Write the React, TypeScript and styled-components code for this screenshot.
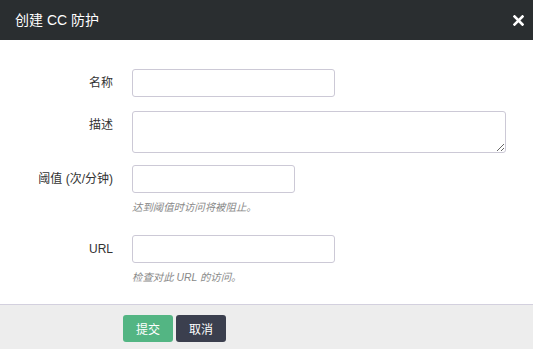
import styled, { createGlobalStyle } from "styled-components";

const GlobalStyle = createGlobalStyle`
    html, body {
        margin: 0;
        padding: 0;
        height: 100%;
        background: #fff;
    }
    body {
        font-family: "Liberation Sans", "Noto Sans CJK SC", sans-serif;
        color: #333;
    }
    #root {
        height: 100%;
    }
`;

const Modal = styled.div`
    display: flex;
    flex-direction: column;
    height: 100vh;
    background: #fff;
`;

const Header = styled.div`
    display: flex;
    align-items: center;
    justify-content: space-between;
    height: 40px;
    padding: 0 8px 0 15px;
    background: #2a2e30;
    color: #fff;
    flex-shrink: 0;
`;

const Title = styled.h4`
    margin: 0;
    font-size: 14px;
    font-weight: normal;
    line-height: 1;
`;

const CloseButton = styled.button`
    display: flex;
    align-items: center;
    justify-content: center;
    width: 14px;
    height: 14px;
    padding: 0;
    border: 0;
    background: transparent;
    cursor: pointer;
`;

const Body = styled.form`
    flex: 1;
    padding-top: 29px;
`;

const FormGroup = styled.div<{ $mb: number }>`
    display: grid;
    grid-template-columns: 113px 1fr;
    column-gap: 19px;
    margin-bottom: ${(p) => p.$mb}px;
`;

const Label = styled.label`
    text-align: right;
    font-size: 12px;
    line-height: 28px;
    color: #333;
`;

const Field = styled.div`
    display: flex;
    flex-direction: column;
    align-items: flex-start;
`;

const Input = styled.input<{ $w: number }>`
    width: ${(p) => p.$w}px;
    height: 28px;
    padding: 0 8px;
    border: 1px solid #ccc9d6;
    border-radius: 3px;
    box-sizing: border-box;
    font-size: 12px;
    outline: none;
`;

const TextArea = styled.textarea`
    width: 374px;
    height: 42px;
    padding: 4px 8px;
    border: 1px solid #ccc9d6;
    border-radius: 3px;
    box-sizing: border-box;
    font-size: 12px;
    font-family: inherit;
    outline: none;
`;

const Help = styled.span`
    margin-top: 7px;
    font-size: 10.4px;
    line-height: 16px;
    font-style: italic;
    color: #888;
`;

const Footer = styled.div`
    display: flex;
    gap: 3px;
    height: 45px;
    padding: 10px 0 0 123px;
    box-sizing: border-box;
    border-top: 1px solid #d3d0de;
    background: #ededed;
    flex-shrink: 0;
`;

const Button = styled.button<{ $variant: "primary" | "dark" }>`
    width: 50px;
    height: 27px;
    padding: 0;
    border: 0;
    border-radius: 3px;
    font-size: 12px;
    font-family: inherit;
    color: #fff;
    background: ${(p) => (p.$variant === "primary" ? "#53b583" : "#3b3f4e")};
    cursor: pointer;
`;

export default function App() {
    return (
        <>
            <GlobalStyle />
            <Modal>
                <Header>
                    <Title>创建 CC 防护</Title>
                    <CloseButton aria-label="close">
                        <svg width="11" height="11" viewBox="0 0 11 11">
                            <path d="M1.5 1.5 L9.5 9.5 M9.5 1.5 L1.5 9.5" stroke="#fff" strokeWidth="2.6" strokeLinecap="square" />
                        </svg>
                    </CloseButton>
                </Header>
                <Body>
                    <FormGroup $mb={14}>
                        <Label>名称</Label>
                        <Field>
                            <Input $w={203} type="text" />
                        </Field>
                    </FormGroup>
                    <FormGroup $mb={12}>
                        <Label>描述</Label>
                        <Field>
                            <TextArea />
                        </Field>
                    </FormGroup>
                    <FormGroup $mb={19}>
                        <Label>阈值 (次/分钟)</Label>
                        <Field>
                            <Input $w={163} type="text" />
                            <Help>达到阈值时访问将被阻止。</Help>
                        </Field>
                    </FormGroup>
                    <FormGroup $mb={0}>
                        <Label>URL</Label>
                        <Field>
                            <Input $w={203} type="text" />
                            <Help>检查对此 URL 的访问。</Help>
                        </Field>
                    </FormGroup>
                </Body>
                <Footer>
                    <Button $variant="primary" type="button">提交</Button>
                    <Button $variant="dark" type="button">取消</Button>
                </Footer>
            </Modal>
        </>
    );
}
